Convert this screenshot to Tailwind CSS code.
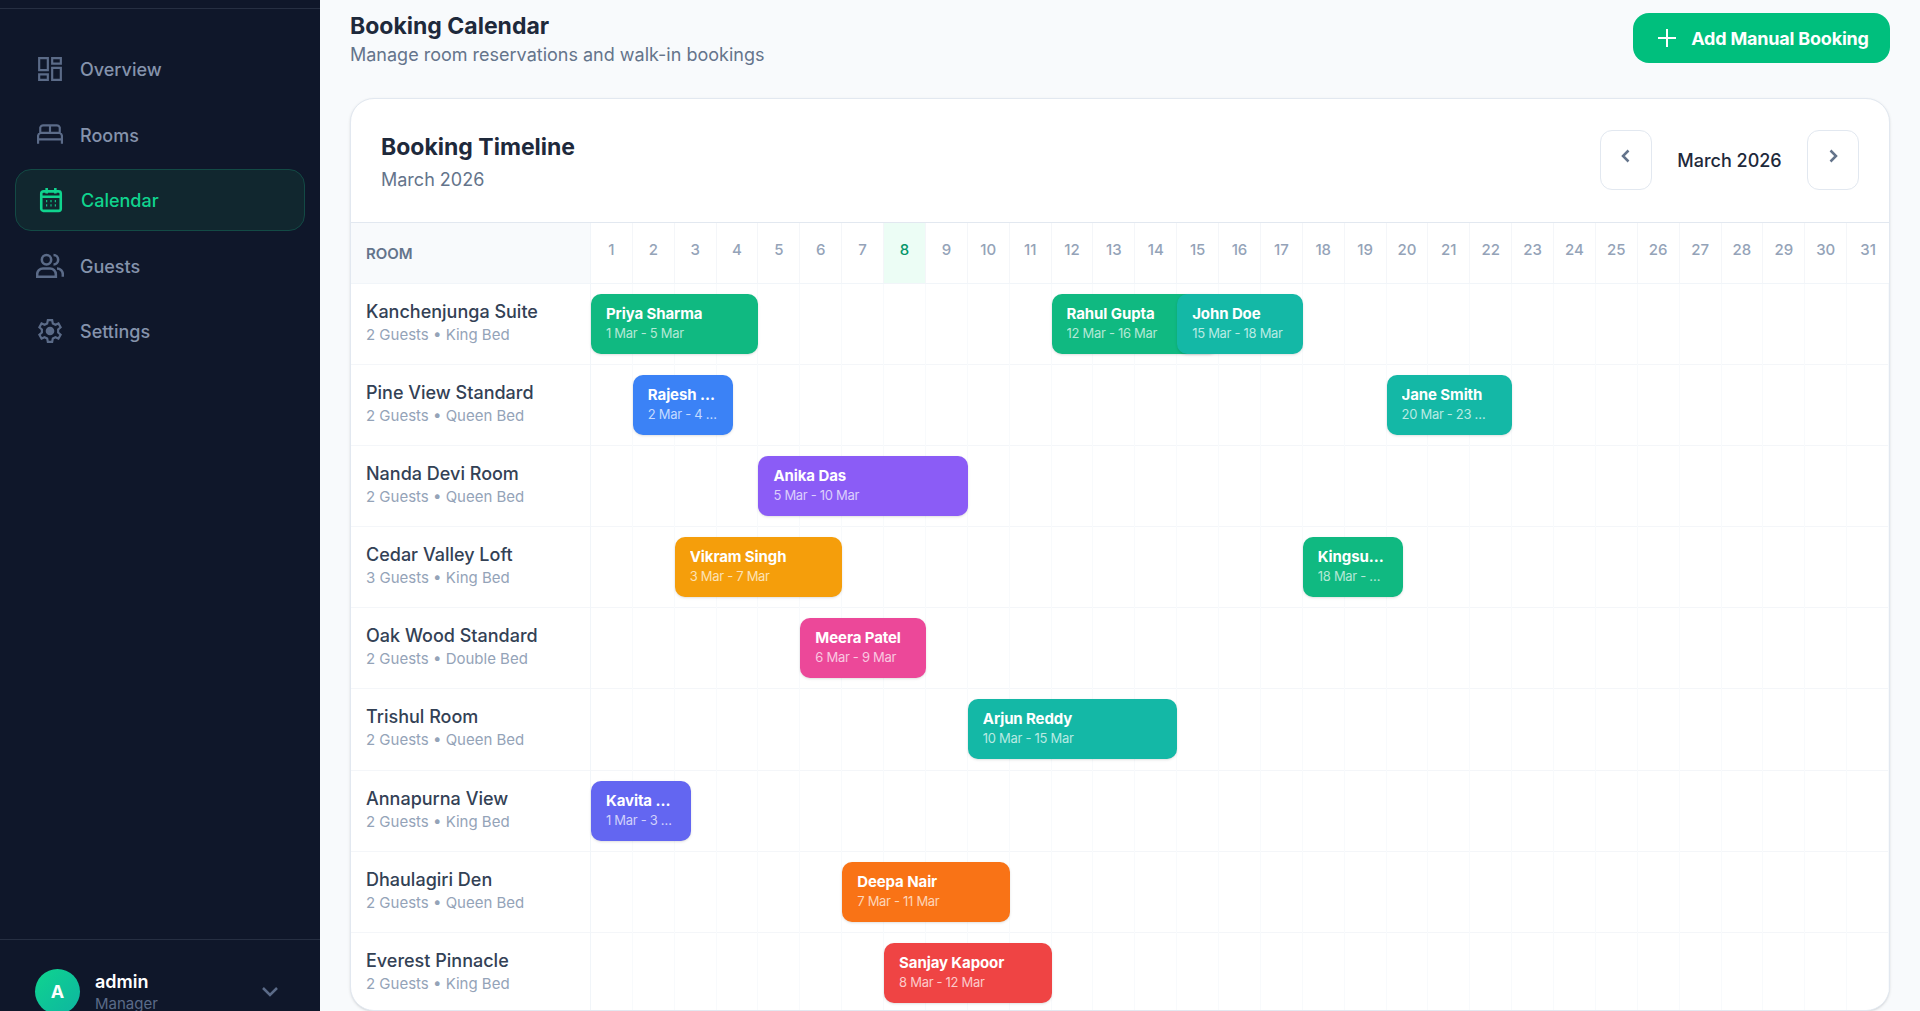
<!DOCTYPE html>
<html lang="en">
<head>
  <meta charset="UTF-8">
  <title>Booking Calendar</title>
  <script src="https://cdn.jsdelivr.net/npm/@tailwindcss/browser@4"></script>
</head>
<body class="h-screen overflow-hidden bg-[#f8fafc] font-['Inter',sans-serif] flex">
  <aside class="w-[320px] h-full shrink-0 bg-[#0f172a] flex flex-col">
    <div class="h-[9px] border-b border-[#262f42]"></div>
    <nav class="flex-1 px-[15px] pt-[29px] flex flex-col gap-[4px]">
      <a class="h-[61.5px] px-[22px] flex items-center gap-[17px] text-[18px] font-medium text-[#8593ac]">
        <svg class="w-[26px] h-[26px]" viewBox="0 0 24 24" fill="none" stroke="#5b6b88" stroke-width="2"><path d="M2 2h8v11H2zM14 2h8v5h-8zM14 11h8v11h-8zM2 17h8v5H2z"/></svg>
        <span class="mt-[2px]">Overview</span>
      </a>
      <a class="h-[61.5px] px-[22px] flex items-center gap-[17px] text-[18px] font-medium text-[#8593ac]">
        <svg class="w-[26px] h-[26px]" viewBox="0 0 24 24" fill="none" stroke="#5b6b88" stroke-width="2"><path d="M1 21v-7a3 3 0 0 1 2-3V6a3 3 0 0 1 3-2h12a3 3 0 0 1 3 2v5a3 3 0 0 1 2 3v7M1 17h22M3 11h18M12 4v7"/></svg>
        <span class="mt-[2px]">Rooms</span>
      </a>
      <a class="h-[61.5px] px-[22px] flex items-center gap-[17px] text-[18px] font-medium text-[#10d48e] bg-[#11272f] border border-[#134a45] rounded-[16px]">
        <svg class="w-[26px] h-[26px]" viewBox="0 0 24 24" fill="none" stroke="#10d48e" stroke-width="2.400"><rect x="3" y="4" width="18" height="18" rx="2"/><path d="M8 1v5M16 1v5M3 9h18"/><path stroke-width="2" d="M7.500 13h1M11.500 13h1M15.500 13h1M7.500 17h1M11.500 17h1M15.500 17h1"/></svg>
        <span class="mt-[2px]">Calendar</span>
      </a>
      <a class="h-[61.5px] px-[22px] flex items-center gap-[17px] text-[18px] font-medium text-[#8593ac]">
        <svg class="w-[28px] h-[28px] -mx-[1px]" viewBox="0 0 24 24" fill="none" stroke="#5b6b88" stroke-width="2.200"><circle cx="9" cy="7.500" r="4"/><path d="M1 22v-2a5 5 0 0 1 5-5h6a5 5 0 0 1 5 5v2zM15 3.500a4 4 0 0 1 0 8M18 15a5 5 0 0 1 5 5v2"/></svg>
        <span class="mt-[2px]">Guests</span>
      </a>
      <a class="h-[61.5px] px-[22px] flex items-center gap-[17px] text-[18px] font-medium text-[#8593ac]">
        <svg class="w-[26px] h-[26px]" viewBox="0 0 24 24" fill="none" stroke="#5b6b88" stroke-width="2"><path d="M10 2h4l.6 3 2.400 1.200 2.800-1.200 2 3.500-2.300 2v3l2.300 2-2 3.500-2.800-1.200-2.400 1.200-.6 3h-4l-.6-3L7 17.800l-2.800 1.200-2-3.500 2.300-2v-3l-2.300-2 2-3.500L7 6.200 9.400 5z"/><circle cx="12" cy="12" r="3" fill="#5b6b88"/></svg>
        <span class="mt-[2px]">Settings</span>
      </a>
    </nav>
    <div class="h-[72px] border-t border-[#262f42] pl-[35px] pr-[38px] pt-[29px] flex items-start">
      <div class="w-[45px] h-[45px] shrink-0 rounded-full bg-gradient-to-br from-[#10d48e] to-[#0fb5a0] flex items-center justify-center text-white font-bold text-[18px]">A</div>
      <div class="ml-[15px] flex-1 pt-[1px]">
        <div class="text-[18px] leading-[24px] font-semibold text-white">admin</div>
        <div class="text-[15px] leading-[20px] text-[#5b6b88]">Manager</div>
      </div>
      <svg class="w-[24px] h-[24px] mt-[10px]" viewBox="0 0 24 24" fill="none" stroke="#5b6b88" stroke-width="2.500"><path d="M5 9l7 7 7-7"/></svg>
    </div>
  </aside>

  <main class="flex-1 min-w-0 pl-[30px] pr-[30px] flex flex-col">
    <header class="h-[98px] flex justify-between items-start">
      <div class="pt-[10px]">
        <h1 class="text-[23px] leading-[32px] font-bold text-[#1e293b]">Booking Calendar</h1>
        <p class="mt-[1px] text-[18px] leading-[24px] text-[#64748b]">Manage room reservations and walk-in bookings</p>
      </div>
      <button class="mt-[13px] h-[50px] w-[257px] pl-[3px] rounded-[16px] bg-[#00bf7d] text-white text-[18px] font-bold tracking-[-0.2px] flex items-center justify-center gap-[14px]">
        <svg class="w-[20px] h-[20px]" viewBox="0 0 20 20" fill="none" stroke="white" stroke-width="2"><path d="M10 1v18M1 10h18"/></svg>
        Add Manual Booking
      </button>
    </header>

    <section class="h-[913px] w-[1540px] shrink-0 bg-white border border-[#e2e8f0] rounded-[24px] shadow-sm overflow-hidden">
      <div class="h-[124px] px-[30px] flex items-center justify-between border-b border-[#e2e8f0]">
        <div class="pt-[1px]">
          <h2 class="text-[23px] leading-[32px] font-bold text-[#1e293b]">Booking Timeline</h2>
          <p class="mt-[5px] text-[18px] leading-[24px] text-[#64748b]">March 2026</p>
        </div>
        <div class="flex items-center mb-[1px]">
          <button class="w-[52px] h-[60px] rounded-[12px] border border-[#e2e8f0] flex items-center justify-center">
            <svg class="w-[16px] h-[16px] -mt-[8px]" viewBox="0 0 16 16" fill="none" stroke="#64748b" stroke-width="2.500"><path d="M10.500 2.500 5 8l5.500 5.500"/></svg>
          </button>
          <span class="w-[155px] text-center text-[18px] font-medium text-[#1e293b]">March 2026</span>
          <button class="w-[52px] h-[60px] rounded-[12px] border border-[#e2e8f0] flex items-center justify-center">
            <svg class="w-[16px] h-[16px] -mt-[8px]" viewBox="0 0 16 16" fill="none" stroke="#64748b" stroke-width="2.500"><path d="M5.500 2.500 11 8l-5.500 5.500"/></svg>
          </button>
        </div>
      </div>
      <div id="timeline"></div>
    </section>
  </main>

  <script>
    const gridCols = 'grid grid-cols-[240px_repeat(31,minmax(0,1fr))]';
    const rooms = [
      ['Kanchenjunga Suite', '2 Guests • King Bed', [
        ['Priya Sharma', '1 Mar - 5 Mar', 1, 5, 'bg-[#10b981]', 'text-[#b4e8d6]'],
        ['Rahul Gupta', '12 Mar - 16 Mar', 12, 16, 'bg-[#10b981]', 'text-[#b4e8d6]'],
        ['John Doe', '15 Mar - 18 Mar', 15, 18, 'bg-[#14b8a6]', 'text-[#b8eae3]']]],
      ['Pine View Standard', '2 Guests • Queen Bed', [
        ['Rajesh Kumar', '2 Mar - 4 Mar', 2, 4, 'bg-[#3b82f6]', 'text-[#c4daff]'],
        ['Jane Smith', '20 Mar - 23 Mar', 20, 23, 'bg-[#14b8a6]', 'text-[#b8eae3]']]],
      ['Nanda Devi Room', '2 Guests • Queen Bed', [
        ['Anika Das', '5 Mar - 10 Mar', 5, 10, 'bg-[#8b5cf6]', 'text-[#dccffc]']]],
      ['Cedar Valley Loft', '3 Guests • King Bed', [
        ['Vikram Singh', '3 Mar - 7 Mar', 3, 7, 'bg-[#f59e0b]', 'text-[#fce2b6]'],
        ['Kingsuk Roy', '18 Mar - 20 Mar', 18, 20, 'bg-[#10b981]', 'text-[#b4e8d6]']]],
      ['Oak Wood Standard', '2 Guests • Double Bed', [
        ['Meera Patel', '6 Mar - 9 Mar', 6, 9, 'bg-[#ec4899]', 'text-[#f9c8e0]']]],
      ['Trishul Room', '2 Guests • Queen Bed', [
        ['Arjun Reddy', '10 Mar - 15 Mar', 10, 15, 'bg-[#14b8a6]', 'text-[#b8eae3]']]],
      ['Annapurna View', '2 Guests • King Bed', [
        ['Kavita Menon', '1 Mar - 3 Mar', 1, 3, 'bg-[#6366f1]', 'text-[#d0d1fb]']]],
      ['Dhaulagiri Den', '2 Guests • Queen Bed', [
        ['Deepa Nair', '7 Mar - 11 Mar', 7, 11, 'bg-[#f97316]', 'text-[#fdd5b8]']]],
      ['Everest Pinnacle', '2 Guests • King Bed', [
        ['Sanjay Kapoor', '8 Mar - 12 Mar', 8, 12, 'bg-[#ef4444]', 'text-[#fbcaca]']]],
    ];

    let days = '';
    let cells = '';
    for (let d = 1; d <= 31; d++) {
      const today = d === 8;
      days += `<div class="pt-[16px] text-center text-[15px] font-medium border-r border-[#f4f6f9] last:border-r-0 ${today ? 'bg-[#ecfdf5] text-[#059669]' : 'text-[#94a3b8]'}">${d}</div>`;
      cells += `<div class="row-start-1 h-[81.1px] border-r border-[#f8fafc] last:border-r-0" style="grid-column:${d + 1}"></div>`;
    }

    let html = `<div class="${gridCols} h-[61px] border-b border-[#f1f5f9]">
      <div class="bg-[#f8fafc] pl-[15px] pt-[3px] flex items-center text-[15px] font-semibold text-[#64748b] border-r border-[#f1f5f9]">ROOM</div>${days}</div>`;

    rooms.forEach(room => {
      let bars = '';
      room[2].forEach(b => {
        const span = b[3] - b[2];
        // short stays keep a minimum width of 100px
        bars += `<div class="row-start-1 self-start mt-[10px] h-[60px] min-w-[100px] pl-[15px] pr-[15px] pb-[2px] rounded-[10px] shadow-sm flex flex-col justify-center z-10 ${b[4]} overflow-hidden" style="grid-column:${b[2] + 1} / span ${span}">
          <div class="text-[15px] leading-[20px] font-bold tracking-[-0.1px] text-white truncate">${b[0]}</div>
          <div class="text-[13px] leading-[18px] tracking-[-0.3px] truncate ${b[5]}">${b[1]}</div>
        </div>`;
      });
      html += `<div class="${gridCols} h-[81.1px] border-b border-[#f4f6f9]">
        <div class="row-start-1 col-start-1 pl-[15px] pt-[16px] border-r border-[#f1f5f9]">
          <div class="text-[18px] leading-[24px] font-medium text-[#334155]">${room[0]}</div>
          <div class="mt-[1px] text-[15px] leading-[20px] text-[#94a3b8]">${room[1]}</div>
        </div>${cells}${bars}</div>`;
    });
    document.getElementById('timeline').innerHTML = html;
  </script>
</body>
</html>
